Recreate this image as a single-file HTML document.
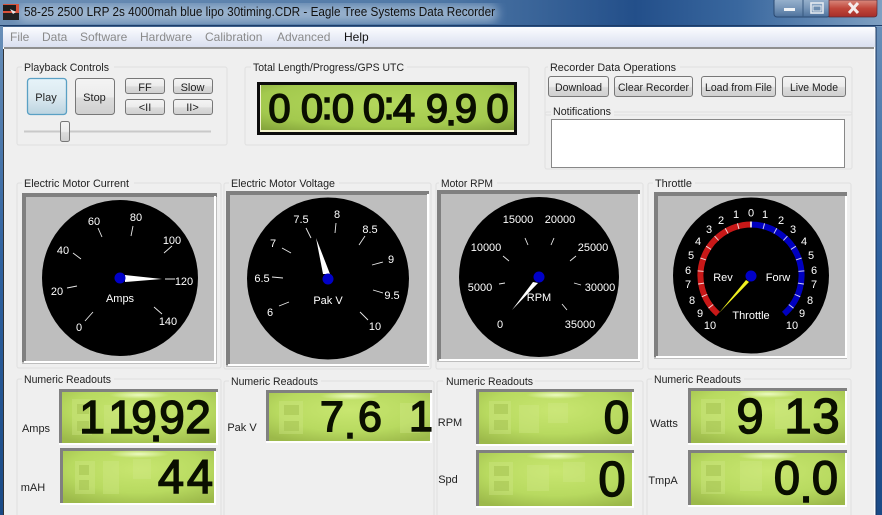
<!DOCTYPE html>
<html><head><meta charset="utf-8"><title>Eagle Tree Systems Data Recorder</title>
<style>
html,body{margin:0;padding:0;background:#efefef;width:882px;height:515px;overflow:hidden}
svg{display:block;position:absolute;left:0;top:0}
text{font-family:"Liberation Sans",sans-serif;font-size:11px;fill:#222}
.g text,.g{fill:#fff;text-anchor:middle;font-size:11px}
.b{text-anchor:middle;fill:#222}
.m{font-size:12px;fill:#8a8a8a}
.d{font-family:"Liberation Sans",sans-serif;fill:#0a0f00;stroke:#0a0f00;stroke-width:1.5px;text-anchor:middle}
</style></head><body>
<svg width="882" height="515" viewBox="0 0 882 515" xmlns="http://www.w3.org/2000/svg">
<defs>
<linearGradient id="tb" x1="0" x2="1" y1="0" y2="0"><stop offset="0" stop-color="#6d8fb5"/><stop offset=".5" stop-color="#4f78a6"/><stop offset=".72" stop-color="#234f8a"/><stop offset=".84" stop-color="#3a689f"/><stop offset="1" stop-color="#7fa0c2"/></linearGradient>
<linearGradient id="fr" x1="0" x2="0" y1="0" y2="1"><stop offset="0" stop-color="#6f94bb"/><stop offset=".5" stop-color="#2f62a0"/><stop offset="1" stop-color="#1a4a86"/></linearGradient>
<linearGradient id="mn" x1="0" x2="0" y1="0" y2="1"><stop offset="0" stop-color="#fbfcff"/><stop offset="1" stop-color="#d9dfef"/></linearGradient>
<linearGradient id="btn" x1="0" x2="0" y1="0" y2="1"><stop offset="0" stop-color="#f4f4f4"/><stop offset=".5" stop-color="#ececec"/><stop offset=".55" stop-color="#dcdcdc"/><stop offset="1" stop-color="#cfcfcf"/></linearGradient>
<linearGradient id="play" x1="0" x2="0" y1="0" y2="1"><stop offset="0" stop-color="#e6f3f9"/><stop offset=".5" stop-color="#dbe9f0"/><stop offset="1" stop-color="#bcd4e0"/></linearGradient>
<linearGradient id="wb" x1="0" x2="0" y1="0" y2="1"><stop offset="0" stop-color="#9db6d0"/><stop offset=".5" stop-color="#7a98ba"/><stop offset="1" stop-color="#4c719c"/></linearGradient>
<linearGradient id="wr" x1="0" x2="0" y1="0" y2="1"><stop offset="0" stop-color="#d98a7e"/><stop offset=".5" stop-color="#c0463a"/><stop offset="1" stop-color="#a52e2a"/></linearGradient>
<radialGradient id="lcd" cx=".5" cy=".35" r=".75"><stop offset="0" stop-color="#c8e670"/><stop offset=".6" stop-color="#b8da60"/><stop offset="1" stop-color="#9cb94a"/></radialGradient>
<radialGradient id="lcdt" cx=".5" cy=".4" r=".75"><stop offset="0" stop-color="#b4d85c"/><stop offset=".7" stop-color="#a3c94e"/><stop offset="1" stop-color="#86a63c"/></radialGradient>
<radialGradient id="gl" cx=".5" cy=".5" r=".5"><stop offset="0" stop-color="#f3ffd0" stop-opacity=".85"/><stop offset="1" stop-color="#f3ffd0" stop-opacity="0"/></radialGradient>
<filter id="blur"><feGaussianBlur stdDeviation="5"/></filter>
</defs>

<!-- frame -->
<rect width="882" height="515" fill="url(#fr)"/>
<rect width="882" height="27" fill="url(#tb)"/>
<rect x="18" y="5" width="480" height="17" rx="8" fill="#b7cade" opacity=".7" filter="url(#blur)"/>
<rect x="0" y="25" width="882" height="1" fill="#1d3d6a"/>
<!-- icon -->
<rect x="3" y="4" width="16" height="16" fill="#d8513a"/>
<rect x="3" y="5" width="13" height="6" fill="#1c1c1c"/>
<path d="M3 13h16v7H3z" fill="#222"/><path d="M10 9l6 3-3 2z" fill="#e8e8e8"/>
<text x="24" y="16" textLength="471" lengthAdjust="spacingAndGlyphs" style="font-size:12.5px;fill:#111">58-25 2500 LRP 2s 4000mah blue lipo 30timing.CDR - Eagle Tree Systems Data Recorder</text>
<!-- caption buttons -->
<path d="M778 0h51v16h-51z" fill="url(#wb)"/>
<rect x="774" y="-2" width="56" height="19" rx="3" fill="url(#wb)" stroke="#2b4a72"/>
<path d="M829 0h48v14q0 3-3 3h-45z" fill="url(#wr)" stroke="#5c2a35" stroke-width=".7"/>
<line x1="803" x2="803" y1="0" y2="17" stroke="#37587f"/>
<rect x="784" y="8" width="11" height="3" fill="#f0f3f6"/>
<rect x="811" y="3" width="12" height="10" fill="none" stroke="#e4eaf0" stroke-width="1.6"/>
<rect x="813" y="6" width="8" height="5" fill="#6d8db0" stroke="#e4eaf0"/>
<path d="M849 3l9 10M858 3l-9 10" stroke="#f4ecec" stroke-width="3"/>

<!-- client -->
<rect x="3" y="27" width="873" height="488" fill="#fff"/>
<rect x="3" y="26.5" width="873" height="1" fill="#1d3d6a"/>
<rect x="3" y="27" width="872" height="20" fill="url(#mn)"/>
<rect x="4" y="47" width="870" height="2" fill="#8f8f8f"/>
<rect x="4" y="49" width="870" height="466" fill="#efefef"/>
<rect x="3" y="49" width="1" height="466" fill="#333"/>
<rect x="875.5" y="27" width="1" height="488" fill="#12305c"/>

<text class="m" x="10" y="41">File</text><text class="m" x="42" y="41">Data</text><text class="m" x="80" y="41">Software</text><text class="m" x="140" y="41">Hardware</text><text class="m" x="205" y="41">Calibration</text><text class="m" x="277" y="41">Advanced</text><text class="m" x="344" y="41" style="fill:#111">Help</text>

<!-- group boxes -->
<g fill="none" stroke="#e2e2e2" stroke-width="1.2">
<rect x="17" y="67" width="210" height="78" rx="2"/>
<rect x="245" y="67" width="284" height="78" rx="2"/>
<rect x="545" y="67" width="307" height="48" rx="2"/>
<rect x="545" y="112" width="307" height="57" rx="2"/>
<rect x="17" y="183" width="204" height="185" rx="2"/>
<rect x="224" y="183" width="207" height="186" rx="2"/>
<rect x="436" y="183" width="207" height="186" rx="2"/>
<rect x="648" y="183" width="203" height="186" rx="2"/>
<rect x="17" y="379" width="204" height="140" rx="2"/>
<rect x="224" y="381" width="210" height="140" rx="2"/>
<rect x="437" y="381" width="206" height="140" rx="2"/>
<rect x="647" y="379" width="204" height="140" rx="2"/>
</g>
<g>
<rect x="22" y="62" width="92" height="12" fill="#efefef"/><rect x="251" y="62" width="156" height="12" fill="#efefef"/><rect x="548" y="62" width="132" height="12" fill="#efefef"/><rect x="551" y="106" width="63" height="12" fill="#efefef"/>
<rect x="22" y="178" width="112" height="12" fill="#efefef"/><rect x="229" y="178" width="110" height="12" fill="#efefef"/><rect x="439" y="178" width="58" height="12" fill="#efefef"/><rect x="653" y="178" width="42" height="12" fill="#efefef"/>
<rect x="22" y="374" width="92" height="12" fill="#efefef"/><rect x="229" y="376" width="92" height="12" fill="#efefef"/><rect x="443" y="376" width="92" height="12" fill="#efefef"/><rect x="652" y="374" width="92" height="12" fill="#efefef"/>
</g>
<text x="24" y="71" textLength="85" lengthAdjust="spacingAndGlyphs">Playback Controls</text>
<text x="253" y="71" textLength="151" lengthAdjust="spacingAndGlyphs">Total Length/Progress/GPS UTC</text>
<text x="550" y="71" textLength="126" lengthAdjust="spacingAndGlyphs">Recorder Data Operations</text>
<text x="553" y="115" textLength="58" lengthAdjust="spacingAndGlyphs">Notifications</text>
<text x="24" y="187" textLength="105" lengthAdjust="spacingAndGlyphs">Electric Motor Current</text>
<text x="231" y="187" textLength="104" lengthAdjust="spacingAndGlyphs">Electric Motor Voltage</text>
<text x="441" y="187" textLength="52" lengthAdjust="spacingAndGlyphs">Motor RPM</text>
<text x="655" y="187" textLength="37" lengthAdjust="spacingAndGlyphs">Throttle</text>
<text x="24" y="383" textLength="87" lengthAdjust="spacingAndGlyphs">Numeric Readouts</text>
<text x="231" y="385" textLength="87" lengthAdjust="spacingAndGlyphs">Numeric Readouts</text>
<text x="446" y="385" textLength="87" lengthAdjust="spacingAndGlyphs">Numeric Readouts</text>
<text x="654" y="383" textLength="87" lengthAdjust="spacingAndGlyphs">Numeric Readouts</text>

<!-- playback buttons -->
<rect x="27.5" y="78.5" width="39" height="36" rx="3" fill="url(#play)" stroke="#5aa0c4" stroke-width="1.3"/>
<rect x="75.5" y="78.5" width="39" height="36" rx="3" fill="url(#btn)" stroke="#777"/>
<rect x="125.5" y="78.5" width="39" height="15" rx="2.5" fill="url(#btn)" stroke="#777"/>
<rect x="173.5" y="78.5" width="39" height="15" rx="2.5" fill="url(#btn)" stroke="#777"/>
<rect x="125.5" y="99.5" width="39" height="15" rx="2.5" fill="url(#btn)" stroke="#777"/>
<rect x="173.5" y="99.5" width="39" height="15" rx="2.5" fill="url(#btn)" stroke="#777"/>
<text class="b" x="46" y="101">Play</text><text class="b" x="94.5" y="101">Stop</text><text class="b" x="145" y="91">FF</text><text class="b" x="192.5" y="91">Slow</text><text class="b" x="145" y="111">&lt;II</text><text class="b" x="192.5" y="111">II&gt;</text>
<!-- slider -->
<rect x="24" y="130.5" width="187" height="2" fill="#c9c9c9"/>
<rect x="60.5" y="121.5" width="9" height="20" rx="2" fill="url(#btn)" stroke="#777"/>

<!-- recorder buttons -->
<rect x="548.5" y="76.5" width="60" height="20" rx="2.5" fill="url(#btn)" stroke="#777"/>
<rect x="614.5" y="76.5" width="78" height="20" rx="2.5" fill="url(#btn)" stroke="#777"/>
<rect x="701.5" y="76.5" width="74" height="20" rx="2.5" fill="url(#btn)" stroke="#777"/>
<rect x="782.5" y="76.5" width="63" height="20" rx="2.5" fill="url(#btn)" stroke="#777"/>
<text class="b" x="578.5" y="91" textLength="47" lengthAdjust="spacingAndGlyphs">Download</text>
<text class="b" x="653.5" y="91" textLength="71" lengthAdjust="spacingAndGlyphs">Clear Recorder</text>
<text class="b" x="738.5" y="91" textLength="67" lengthAdjust="spacingAndGlyphs">Load from File</text>
<text class="b" x="814" y="91" textLength="48" lengthAdjust="spacingAndGlyphs">Live Mode</text>
<rect x="551.5" y="119.5" width="293" height="48" fill="#fff" stroke="#888"/>

<!-- timer LCD -->
<rect x="257" y="82" width="260" height="53" fill="#0c0c0c"/>
<rect x="260" y="85" width="254" height="47" fill="#f3f3cf"/>
<rect x="261" y="85" width="253" height="45" fill="url(#lcdt)"/>
<text class="d" style="font-size:40px" x="279.5 312 327 343 374 389 404 437 451 466 497.5" y="122 122 119 122 122 119 122 122 125 122 122">00:00:49.90</text>

<!-- gauge panels -->
<g fill="#bebebe">
<rect x="22" y="193" width="195" height="171"/>
<rect x="226" y="191" width="203" height="176"/>
<rect x="437" y="190" width="203" height="172"/>
<rect x="654" y="192" width="193" height="167"/>
</g>
<g fill="none" stroke="#808080" stroke-width="4">
<path d="M24 362V195H217"/><path d="M228 365V193H429"/><path d="M439 360V192H640"/><path d="M656 357V194H847"/>
</g>
<g fill="none" stroke="#fff" stroke-width="2">
<path d="M24 362H215V196"/><path d="M228 365H428V194"/><path d="M439 360H639V194"/><path d="M656 357H846V196"/>
</g>

<!-- gauge 1 -->
<circle cx="120" cy="278" r="78" fill="#000"/>
<g stroke="#e8e8e8" stroke-width=".9" fill="none"><path d="M85 321L93 312M67 288L77 286M73 253L81 259M98 228L102 237M133 226L131 236M172 246L164 253M165 279L175 279M154 307L162 314"/></g>
<polygon points="125,275 125,282 162,279" fill="#fff"/>
<circle cx="120" cy="278" r="5.5" fill="#0000c8"/>
<g class="g"><text x="79" y="331">0</text><text x="57" y="295">20</text><text x="63" y="254">40</text><text x="94" y="225">60</text><text x="136" y="221">80</text><text x="172" y="244">100</text><text x="184" y="285">120</text><text x="168" y="325">140</text><text x="120" y="302">Amps</text></g>

<!-- gauge 2 -->
<circle cx="328" cy="278.5" r="81" fill="#000"/>
<g stroke="#e8e8e8" stroke-width=".9" fill="none"><path d="M279 306L289 302M272 277L283 278M282 248L291 253M306 228L311 238M336 223L335 233M365 236L359 245M383 262L372 265M373 290L383 293M360 312L368 320"/></g>
<polygon points="316,238 323,274 330,274" fill="#fff"/>
<circle cx="328" cy="279" r="5.5" fill="#0000c8"/>
<g class="g"><text x="270" y="316">6</text><text x="262" y="282">6.5</text><text x="273" y="247">7</text><text x="301" y="223">7.5</text><text x="337" y="218">8</text><text x="370" y="233">8.5</text><text x="391" y="263">9</text><text x="392" y="299">9.5</text><text x="375" y="330">10</text><text x="328" y="304">Pak V</text></g>

<!-- gauge 3 -->
<circle cx="539" cy="277" r="80" fill="#000"/>
<g stroke="#e8e8e8" stroke-width=".9" fill="none"><path d="M499 284L505 283M503 256L509 261M525 238L528 245M554 238L551 245M576 256L570 261M574 283L581 285M562 304L567 310"/></g>
<polygon points="512,310 533,282 538,283" fill="#fff"/>
<circle cx="539" cy="277" r="5.5" fill="#0000c8"/>
<g class="g"><text x="500" y="328">0</text><text x="480" y="291">5000</text><text x="486" y="251">10000</text><text x="518" y="223">15000</text><text x="560" y="223">20000</text><text x="593" y="251">25000</text><text x="600" y="291">30000</text><text x="580" y="328">35000</text><text x="539" y="301">RPM</text></g>

<!-- gauge 4 -->
<circle cx="751" cy="275.5" r="78" fill="#000"/>
<path d="M718 314A51 51 0 0 1 751 224.5" fill="none" stroke="#c81818" stroke-width="6"/>
<path d="M751 224.5A51 51 0 0 1 784 314" fill="none" stroke="#0000c0" stroke-width="6"/>
<path d="M751 224.5A51 51 0 0 1 784 314" fill="none" stroke="#fff" stroke-opacity=".8" stroke-width="6" stroke-dasharray="1 11.46"/>
<path d="M751 224.5A51 51 0 0 0 718 314" fill="none" stroke="#fff" stroke-opacity=".8" stroke-width="6" stroke-dasharray="1 11.46"/>
<polygon points="719,313 746,280 749,282" fill="#f0f020"/>
<circle cx="751" cy="276" r="5.5" fill="#0000c8"/>
<g class="g"><text x="710" y="329">10</text><text x="700" y="317">9</text><text x="692" y="304">8</text><text x="688" y="288">7</text><text x="688" y="274">6</text><text x="691" y="259">5</text><text x="698" y="245">4</text><text x="709" y="233">3</text><text x="721" y="224">2</text><text x="736" y="218">1</text><text x="751" y="216.5">0</text><text x="765" y="218">1</text><text x="781" y="224">2</text><text x="793" y="233">3</text><text x="804" y="245">4</text><text x="811" y="259">5</text><text x="814" y="274">6</text><text x="814" y="288">7</text><text x="810" y="304">8</text><text x="802" y="317">9</text><text x="792" y="329">10</text><text x="723" y="281">Rev</text><text x="778" y="281">Forw</text><text x="751" y="319">Throttle</text></g>

<!-- readout LCD frames -->
<g fill="#fff">
<rect x="59" y="389" width="159" height="56"/><rect x="60" y="448" width="156" height="57"/><rect x="266" y="390" width="166" height="53"/><rect x="476" y="389" width="158" height="57"/><rect x="476" y="450" width="158" height="58"/><rect x="688" y="388" width="159" height="57"/><rect x="688" y="450" width="159" height="57"/>
</g>
<g fill="none" stroke="#808080" stroke-width="3">
<path d="M60.5 443V390.500H218"/><path d="M61.5 503V449.500H216"/><path d="M267.5 441V391.500H432"/><path d="M477.5 444V390.500H634"/><path d="M477.5 506V451.500H634"/><path d="M689.5 443V389.500H847"/><path d="M689.5 505V451.500H847"/>
</g>
<g fill="url(#lcd)">
<rect x="62" y="392" width="154" height="51"/><rect x="63" y="451" width="151" height="52"/><rect x="269" y="393" width="161" height="48"/><rect x="479" y="392" width="153" height="52"/><rect x="479" y="453" width="153" height="53"/><rect x="691" y="391" width="154" height="52"/><rect x="691" y="453" width="154" height="52"/>
</g>
<g fill="url(#gl)">
<ellipse cx="139" cy="395" rx="30" ry="4"/><ellipse cx="139" cy="454" rx="30" ry="4"/><ellipse cx="350" cy="396" rx="30" ry="4"/><ellipse cx="556" cy="395" rx="30" ry="4"/><ellipse cx="556" cy="456" rx="30" ry="4"/><ellipse cx="768" cy="394" rx="30" ry="4"/><ellipse cx="768" cy="456" rx="30" ry="4"/>
</g>
<!-- ghost segments -->
<g fill="#d2e98a" opacity=".35">
<rect x="72" y="399" width="20" height="36"/><rect x="104" y="405" width="16" height="28"/>
<rect x="75" y="461" width="20" height="33"/><rect x="103" y="461" width="16" height="33"/><rect x="133" y="459" width="18" height="20"/>
<rect x="279" y="401" width="24" height="33"/><rect x="400" y="403" width="20" height="30"/>
<rect x="489" y="401" width="22" height="33"/><rect x="519" y="405" width="20" height="28"/><rect x="548" y="403" width="20" height="20"/>
<rect x="489" y="462" width="24" height="33"/><rect x="527" y="465" width="22" height="26"/><rect x="563" y="462" width="22" height="20"/>
<rect x="701" y="399" width="24" height="35"/><rect x="775" y="399" width="22" height="30"/>
<rect x="701" y="461" width="24" height="33"/><rect x="740" y="461" width="22" height="30"/>
</g>
<g fill="#a5c351" opacity=".55">
<rect x="77" y="404" width="12" height="10"/><rect x="77" y="421" width="12" height="10"/>
<rect x="79" y="465" width="10" height="10"/><rect x="79" y="480" width="10" height="10"/>
<rect x="284" y="405" width="15" height="10"/><rect x="284" y="421" width="15" height="10"/>
<rect x="494" y="404" width="14" height="10"/><rect x="494" y="420" width="14" height="10"/>
<rect x="494" y="466" width="15" height="10"/><rect x="494" y="481" width="15" height="10"/>
<rect x="706" y="403" width="15" height="11"/><rect x="706" y="421" width="15" height="11"/>
<rect x="706" y="465" width="15" height="11"/><rect x="706" y="481" width="15" height="11"/>
</g>

<!-- readout values -->
<text class="d" style="font-size:46px" x="92 121 144 156 172 198" y="433 433 433 441 433 433">119.92</text>
<text class="d" style="font-size:47px" x="171 200" y="493">44</text>
<text class="d" style="font-size:43px" x="332 350 370 421" y="431 438 431 431">7.61</text>
<text class="d" style="font-size:46px" x="616.5" y="433">0</text>
<text class="d" style="font-size:49px" x="612" y="496">0</text>
<text class="d" style="font-size:49px" x="750 798 826" y="433">913</text>
<text class="d" style="font-size:47px" x="787 806 825" y="494 502 494">0.0</text>

<!-- readout labels -->
<text class="b" x="36" y="432">Amps</text><text class="b" x="33" y="491">mAH</text><text class="b" x="242" y="431">Pak V</text><text class="b" x="450" y="426">RPM</text><text class="b" x="448" y="483">Spd</text><text class="b" x="664" y="427">Watts</text><text class="b" x="663" y="484">TmpA</text>
</svg>
</body></html>
